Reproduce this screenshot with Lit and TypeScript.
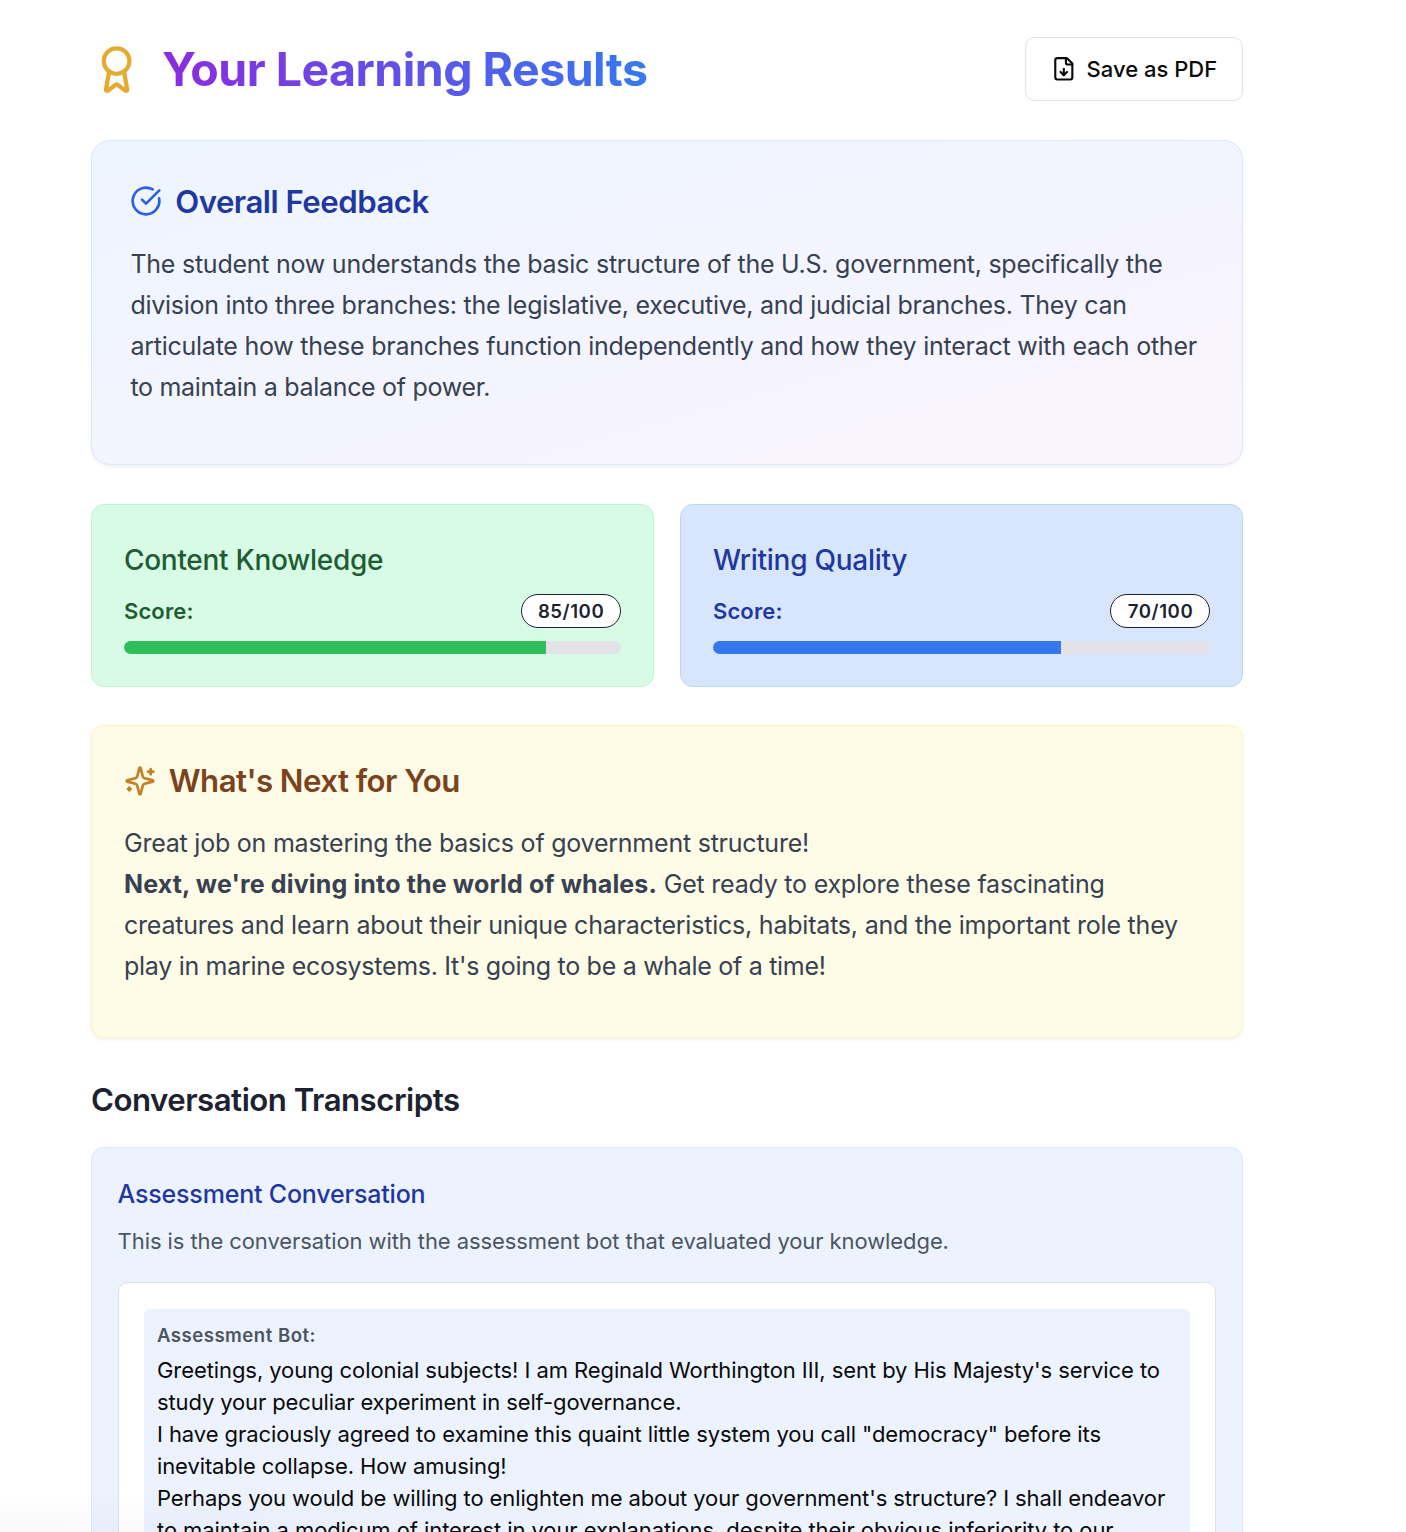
import { LitElement, html, css, svg } from "lit";
import { customElement } from "lit/decorators.js";
import { styleMap } from "lit/directives/style-map.js";

type Run = { text: string; tracking: number; bold?: boolean };
type Line = Run[];

const feedback: Line[] = [
  [{ text: "The student now understands the basic structure of the U.S. government, specifically the", tracking: -0.242 }],
  [{ text: "division into three branches: the legislative, executive, and judicial branches. They can", tracking: -0.262 }],
  [{ text: "articulate how these branches function independently and how they interact with each other", tracking: -0.246 }],
  [{ text: "to maintain a balance of power.", tracking: -0.3 }],
];

const nextSteps: Line[] = [
  [{ text: "Great job on mastering the basics of government structure!", tracking: -0.23 }],
  [
    { text: "Next, we're diving into the world of whales.", tracking: 0.145, bold: true },
    { text: " Get ready to explore these fascinating", tracking: -0.225 },
  ],
  [{ text: "creatures and learn about their unique characteristics, habitats, and the important role they", tracking: -0.209 }],
  [{ text: "play in marine ecosystems. It's going to be a whale of a time!", tracking: -0.295 }],
];

const botMessage: Line[] = [
  [{ text: "Greetings, young colonial subjects! I am Reginald Worthington III, sent by His Majesty's service to", tracking: -0.08 }],
  [{ text: "study your peculiar experiment in self-governance.", tracking: -0.125 }],
  [{ text: 'I have graciously agreed to examine this quaint little system you call "democracy" before its', tracking: -0.077 }],
  [{ text: "inevitable collapse. How amusing!", tracking: -0.1 }],
  [{ text: "Perhaps you would be willing to enlighten me about your government's structure? I shall endeavor", tracking: -0.106 }],
  [{ text: "to maintain a modicum of interest in your explanations, despite their obvious inferiority to our", tracking: -0.075 }],
];

const scores = [
  { title: "Content Knowledge", value: 85, tone: "green", tracking: -0.297 },
  { title: "Writing Quality", value: 70, tone: "blue", tracking: -0.27 },
];

const award = svg`<path d="m15.477 12.89 1.515 8.526a.5.5 0 0 1-.81.47l-3.58-2.687a1 1 0 0 0-1.197 0l-3.586 2.686a.5.5 0 0 1-.81-.469l1.514-8.526"/><circle cx="12" cy="8" r="6"/>`;
const fileDown = svg`<path d="M15 2H6a2 2 0 0 0-2 2v16a2 2 0 0 0 2 2h12a2 2 0 0 0 2-2V7Z"/><path d="M14 2v4a2 2 0 0 0 2 2h4"/><path d="M12 18v-6"/><path d="m9 15 3 3 3-3"/>`;
const circleCheck = svg`<path d="M21.801 10A10 10 0 1 1 17 3.335"/><path d="m9 11 3 3L22 4"/>`;
const sparkles = svg`<path d="M9.937 15.5A2 2 0 0 0 8.5 14.063l-6.135-1.582a.5.5 0 0 1 0-.962L8.5 9.936A2 2 0 0 0 9.937 8.5l1.582-6.135a.5.5 0 0 1 .963 0L14.063 8.5A2 2 0 0 0 15.5 9.937l6.135 1.581a.5.5 0 0 1 0 .964L15.5 14.063a2 2 0 0 0-1.437 1.437l-1.582 6.135a.5.5 0 0 1-.963 0z"/><path d="M20 3v4"/><path d="M22 5h-4"/><path d="M4 17v2"/><path d="M5 18H3"/>`;

const icon = (shape: unknown, cls: string) =>
  html`<svg class="icon ${cls}" viewBox="0 0 24 24" aria-hidden="true">${shape}</svg>`;

const lines = (items: Line[]) =>
  items.map(
    (line) => html`<span class="line">${line.map((run) => {
      const style = styleMap({ letterSpacing: `${run.tracking}px` });
      return run.bold
        ? html`<strong style=${style}>${run.text}</strong>`
        : html`<span style=${style}>${run.text}</span>`;
    })}</span>`
  );

@customElement("app-root")
export class AppRoot extends LitElement {
  static styles = css`
    :host {
      display: block;
      position: relative;
      height: 1532px;
      overflow: hidden;
      background: #fff;
      font-family: Inter, "Liberation Sans", sans-serif;
      color: #0a0a0a;
    }
    /* Soft shade along the lower left edge of the viewport. */
    :host::after {
      content: "";
      position: absolute;
      left: 0;
      bottom: 0;
      width: 700px;
      height: 40px;
      pointer-events: none;
      background: linear-gradient(to bottom, transparent, rgba(0, 0, 0, 0.022));
      mask-image: linear-gradient(to right, #000, transparent);
    }
    * { box-sizing: border-box; }
    h1, h2, h3, h4, p { margin: 0; }
    .page { width: 1243px; padding: 37px 0 0 91px; }
    .icon {
      flex: none;
      fill: none;
      stroke: currentColor;
      stroke-width: 2;
      stroke-linecap: round;
      stroke-linejoin: round;
    }
    .line { display: block; white-space: pre; }

    .top { display: flex; justify-content: space-between; align-items: center; height: 64px; }
    .brand { display: flex; align-items: center; gap: 19.8px; }
    .award { width: 51.2px; height: 51.2px; margin-top: 1.6px; color: #e5aa30; }
    h1 {
      font-size: 46.5px;
      line-height: 58px;
      font-weight: 700;
      letter-spacing: -0.528px;
      white-space: nowrap;
      color: transparent;
      background: linear-gradient(to right, #8b2be0, #3579f0);
      background-clip: text;
      -webkit-background-clip: text;
    }
    .save {
      display: flex;
      align-items: center;
      gap: 10.4px;
      width: 218px;
      height: 64px;
      padding: 0 0 0 24.6px;
      border: 1px solid #e2e2e6;
      border-radius: 9.6px;
      background: #fff;
      color: #0a0a0a;
      font: 500 22px/32px Inter, "Liberation Sans", sans-serif;
      letter-spacing: 0;
      white-space: nowrap;
    }
    .file { width: 25.6px; height: 25.6px; }

    .heading { display: flex; align-items: center; gap: 12.8px; height: 44.8px; margin-bottom: 20.2px; }
    .heading .icon { width: 32px; height: 32px; }
    h2 { font-size: 31.2px; line-height: 44.8px; font-weight: 600; letter-spacing: -0.5px; white-space: nowrap; }
    .heading h2 { padding-top: 1.4px; }
    .prose { font-size: 25px; line-height: 41px; color: #374151; }
    .prose strong { font-weight: 700; }

    .overall {
      height: 325px;
      margin-top: 39px;
      padding: 38.4px;
      border: 1px solid #d8e7fc;
      border-radius: 19.2px;
      background: linear-gradient(to bottom right, #edf5ff, #faf4fe);
      box-shadow: 0 1.6px 3.2px rgba(0, 0, 0, 0.05);
    }
    .overall h2 { color: #1f38a0; }
    .heading .check { margin-top: -1.4px; color: #2a60e4; }

    .scores { display: grid; grid-template-columns: 1fr 1fr; gap: 26px; margin-top: 39px; }
    .score { height: 183px; padding: 32px; border: 1px solid; border-radius: 12.8px; }
    .score.green { background: #d8fbe5; border-color: #bcf5d0; color: #1e5d34; }
    .score.blue { background: #d7e6fc; border-color: #b9d6fb; color: #1f38a0; }
    .score h3 { font-size: 28px; line-height: 46px; font-weight: 500; white-space: nowrap; }
    .row { display: flex; justify-content: space-between; align-items: center; height: 34px; margin-top: 11px; }
    .label { font-size: 22px; font-weight: 600; letter-spacing: 0.12px; }
    .badge {
      height: 34px;
      padding: 0 15.8px 0 16.4px;
      border: 1px solid #1c2230;
      border-radius: 17px;
      background: #fff;
      color: #1c2230;
      font-size: 18.6px;
      line-height: 32px;
      font-weight: 600;
      letter-spacing: 0.54px;
    }
    .track { height: 13px; margin-top: 13px; border-radius: 6.5px; overflow: hidden; background: #e2e2e8; }
    .fill { height: 100%; background: #30bd5c; }
    .blue .fill { background: #3677ed; }

    .next {
      height: 313px;
      margin-top: 38.4px;
      padding: 32px;
      border: 1px solid #fdf5bf;
      border-radius: 12.8px;
      background: #fefbe6;
      box-shadow: 0 1.6px 3.2px rgba(0, 0, 0, 0.06);
    }
    .next h2 { color: #7a431b; letter-spacing: -0.54px; }
    .spark { color: #c57f26; }

    .transcripts { margin-top: 39.2px; color: #1c2230; }
    .conversation {
      height: 460px;
      margin-top: 24.6px;
      padding: 25.6px;
      border: 1px solid #d8e7fa;
      border-radius: 12.8px 12.8px 0 0;
      background: #ecf3fe;
    }
    .conversation h3 { font-size: 25px; line-height: 41px; font-weight: 500; letter-spacing: -0.189px; color: #1f38a0; }
    .about { margin-top: 10px; font-size: 22px; line-height: 32px; letter-spacing: -0.085px; color: #4b5563; }
    .log { height: 400px; margin-top: 25px; padding: 26.4px 25.6px 0; border: 1px solid #dde1ea; border-radius: 9.6px; background: #fff; }
    .bubble { height: 400px; padding: 12.8px; border-radius: 6.4px; background: #ecf3fe; }
    .bubble h4 { font-size: 18.6px; line-height: 27px; font-weight: 600; letter-spacing: 0.483px; color: #4b5563; }
    .message { margin-top: 5px; font-size: 22px; line-height: 32px; }
  `;

  render() {
    return html`
      <main class="page">
        <header class="top">
          <div class="brand">${icon(award, "award")}<h1>Your Learning Results</h1></div>
          <button class="save">${icon(fileDown, "file")}Save as PDF</button>
        </header>

        <section class="overall">
          <div class="heading">${icon(circleCheck, "check")}<h2>Overall Feedback</h2></div>
          <p class="prose">${lines(feedback)}</p>
        </section>

        <section class="scores">
          ${scores.map(
            (s) => html`<article class="score ${s.tone}">
              <h3 style=${styleMap({ letterSpacing: `${s.tracking}px` })}>${s.title}</h3>
              <div class="row"><span class="label">Score:</span><span class="badge">${s.value}/100</span></div>
              <div class="track"><div class="fill" style=${styleMap({ width: `${s.value}%` })}></div></div>
            </article>`
          )}
        </section>

        <section class="next">
          <div class="heading">${icon(sparkles, "spark")}<h2>What's Next for You</h2></div>
          <p class="prose">${lines(nextSteps)}</p>
        </section>

        <h2 class="transcripts">Conversation Transcripts</h2>
        <section class="conversation">
          <h3>Assessment Conversation</h3>
          <p class="about">This is the conversation with the assessment bot that evaluated your knowledge.</p>
          <div class="log">
            <div class="bubble">
              <h4>Assessment Bot:</h4>
              <p class="message">${lines(botMessage)}</p>
            </div>
          </div>
        </section>
      </main>
    `;
  }
}
